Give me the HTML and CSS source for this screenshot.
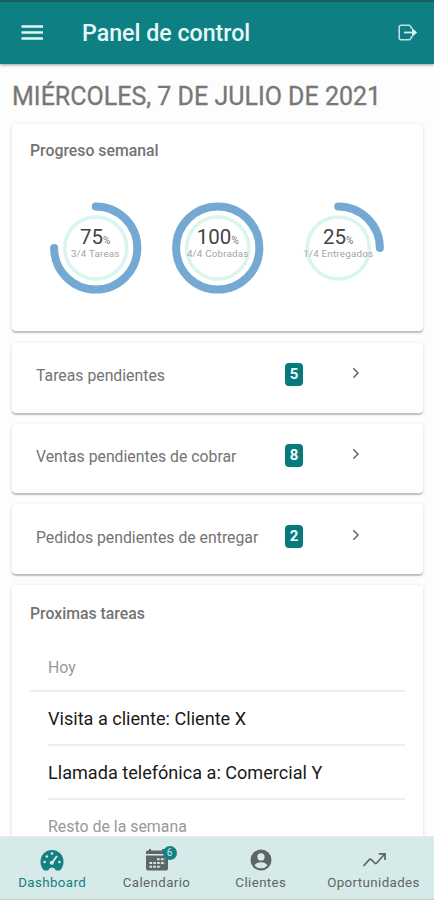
FILE: index.html
```html
<!doctype html>
<html lang="es">

<head>
  <meta charset="utf-8" />
  <meta name="viewport" content="width=device-width,initial-scale=1" />
  <title>Panel de control</title>
  <link rel="stylesheet" href="styles.css">
</head>

<body>
  <div class="app">
    <header class="toolbar">
      <svg class="menu-icon" width="22" height="16" viewBox="0 0 22 16">
        <path d="M.5 1.500h21.500M.5 7.500h21.500M.5 13.500h21.500" stroke="#e2f5f4" stroke-width="2.400" />
      </svg>
      <h1 class="toolbar-title">Panel de control</h1>
      <svg class="logout-icon" width="20" height="18" viewBox="0 0 20 18" fill="none">
        <path d="M13.500 5V3.500L11.500 1.200H3.200Q1.200 1.200 1.200 3.200V13.800Q1.200 15.800 3.200 15.800H11.500L13.500 13.500V12" stroke="#b9dfdf" stroke-width="1.600" />
        <path d="M6 8.500H16" stroke="#d5eeee" stroke-width="1.700" />
        <path d="M14 4L19.200 8.500L14 13Z" fill="#d5eeee" />
      </svg>
    </header>

    <main class="content">
      <h2 class="date">MIÉRCOLES, 7 DE JULIO DE 2021</h2>

      <section class="card progress">
        <h3 class="card-title">Progreso semanal</h3>
        <div class="rings">
          <svg class="ring" viewBox="0 0 121 94">
            <circle class="ring-inner" cx="60.500" cy="47" r="31" />
            <path class="ring-outer" d="M60.500 5.400A41.600 41.600 0 1 1 18.900 47" />
            <text class="ring-value" x="60" y="43">75<tspan class="unit">%</tspan></text>
            <text class="ring-sub" x="60" y="56">3/4 Tareas</text>
          </svg>
          <svg class="ring" viewBox="0 0 121 94">
            <circle class="ring-inner" cx="60.500" cy="47" r="31" />
            <circle class="ring-outer" cx="60.500" cy="47" r="41.600" />
            <text class="ring-value" x="60.500" y="43">100<tspan class="unit">%</tspan></text>
            <text class="ring-sub" x="60.500" y="56">4/4 Cobradas</text>
          </svg>
          <svg class="ring" viewBox="0 0 121 94">
            <circle class="ring-inner" cx="60" cy="47" r="31" />
            <path class="ring-outer" d="M60 5.400A41.600 41.600 0 0 1 101.600 47" />
            <text class="ring-value" x="60" y="43">25<tspan class="unit">%</tspan></text>
            <text class="ring-sub" x="60" y="56">1/4 Entregados</text>
          </svg>
        </div>
      </section>

      <section class="card pending">
        <span class="pending-label">Tareas pendientes</span>
        <span class="badge">5</span>
        <svg class="chevron" width="8" height="12" viewBox="0 0 8 12"><path d="M1.300 1.200L6 6L1.300 10.800" /></svg>
      </section>
      <section class="card pending">
        <span class="pending-label">Ventas pendientes de cobrar</span>
        <span class="badge">8</span>
        <svg class="chevron" width="8" height="12" viewBox="0 0 8 12"><path d="M1.300 1.200L6 6L1.300 10.800" /></svg>
      </section>
      <section class="card pending">
        <span class="pending-label">Pedidos pendientes de entregar</span>
        <span class="badge">2</span>
        <svg class="chevron" width="8" height="12" viewBox="0 0 8 12"><path d="M1.300 1.200L6 6L1.300 10.800" /></svg>
      </section>

      <section class="card tasks">
        <h3 class="card-title">Proximas tareas</h3>
        <div class="list-header">Hoy</div>
        <div class="task">Visita a cliente: Cliente X</div>
        <div class="task">Llamada telefónica a: Comercial Y</div>
        <div class="list-header rest">Resto de la semana</div>
      </section>
    </main>

    <nav class="tabs">
      <a class="tab active">
        <svg width="24" height="24" viewBox="0 0 24 24">
          <path d="M4.200 22.500Q.5 19 .5 13.500A11.500 11.500 0 0 1 23.500 13.500Q23.500 19 19.800 22.500H16Q14.500 19.500 12 19.500T8 22.500Z" fill="currentColor" />
          <path d="M11.500 15.500L17 8" stroke="#d6eae9" stroke-width="2" />
          <circle cx="11.800" cy="14.800" r="2" fill="#d6eae9" />
          <g fill="#d6eae9">
            <circle cx="12" cy="5.500" r="1.300" />
            <circle cx="6.800" cy="8.500" r="1.300" />
            <circle cx="4.600" cy="14" r="1.300" />
            <circle cx="19.400" cy="14" r="1.300" />
          </g>
        </svg>
        <span>Dashboard</span>
      </a>
      <a class="tab">
        <span class="calendar">
          <svg width="24" height="24" viewBox="0 0 24 24">
            <path d="M1 4Q1 2.500 2.500 2.500H4V1H6V2.500H17V1H19V2.500H21.500Q23 2.500 23 4V6H1Z" fill="currentColor" />
            <path d="M1 7.500H23V20.500Q23 22.500 21 22.500H3Q1 22.500 1 20.500Z" fill="currentColor" />
            <path d="M12 11.300H20M4.500 15H20M4.500 18.700H16" stroke="#d6eae9" stroke-width="2" stroke-dasharray="2.600 1.200" />
          </svg>
          <span class="tab-badge">6</span>
        </span>
        <span>Calendario</span>
      </a>
      <a class="tab">
        <svg width="24" height="24" viewBox="0 0 24 24">
          <circle cx="12" cy="12" r="10.500" fill="currentColor" />
          <circle cx="12" cy="8.900" r="3.600" fill="#d6eae9" />
          <path d="M5.500 17.500Q7.500 14.300 12 14.300T18.500 17.500Q16 20.300 12 20.300T5.500 17.500Z" fill="#d6eae9" />
        </svg>
        <span>Clientes</span>
      </a>
      <a class="tab">
        <svg width="24" height="24" viewBox="0 0 24 24" fill="none" stroke="currentColor" stroke-width="1.700">
          <path d="M1.500 18L7.200 11.700Q8.300 10.700 9.300 11.700L12.700 15Q13.700 16 14.700 15L22.500 6.200M16.800 5.800H23V12" />
        </svg>
        <span>Oportunidades</span>
      </a>
    </nav>
  </div>
</body>

</html>
```
FILE: styles.css
```css
* {
  box-sizing: border-box;
}

body {
  margin: 0;
  font-family: Roboto, "Liberation Sans", sans-serif;
  background: #fdfdfd;
}

h1,
h2,
h3 {
  margin: 0;
}

svg {
  display: block;
  flex-shrink: 0;
}

.app {
  display: flex;
  flex-direction: column;
  height: 900px;
  overflow: hidden;
}

.toolbar {
  display: flex;
  align-items: center;
  flex-shrink: 0;
  height: 64px;
  padding: 0 16px 0 21px;
  border-top: 2px solid #15605f;
  background: #0e8084;
  box-shadow: 0 1px 3px #0006;
}

.toolbar-title {
  flex: 1;
  margin-left: 39px;
  font-size: 23.2px;
  font-weight: 500;
  line-height: 30px;
  color: #e6f8f7;
}

.content {
  flex: 1;
  min-height: 0;
  padding: 0 11px 0 12px;
  overflow: hidden;
}

.date {
  height: 60px;
  padding-top: 18px;
  font-size: 25px;
  font-weight: 400;
  line-height: 30px;
  color: #777;
  white-space: nowrap;
  -webkit-text-stroke: 0.3px #777;
}

.card {
  margin-bottom: 11px;
  border-radius: 4px;
  background: #fff;
  box-shadow: 0 2px 1px #00000030, 0 1px 4px #0000001f;
}

.card-title {
  padding-left: 18px;
  font-size: 15.8px;
  font-weight: 500;
  line-height: 20px;
  color: #737373;
}

.progress {
  height: 207px;
  padding-top: 17px;
  margin-bottom: 12px;
}

.rings {
  display: flex;
  justify-content: center;
  padding-top: 40px;
}

.ring {
  width: 121.5px;
  height: 94px;
  overflow: visible;
}

.ring-inner {
  fill: none;
  stroke: #d8f5ef;
  stroke-width: 3.5;
}

.ring-outer {
  fill: none;
  stroke: #73a9d2;
  stroke-width: 8;
  stroke-linecap: round;
}

.ring-value {
  font-size: 20.5px;
  fill: #444;
  text-anchor: middle;
}

.ring-value .unit {
  font-size: 10px;
  fill: #777;
}

.ring-sub {
  font-size: 9.8px;
  letter-spacing: 0.2px;
  fill: #a5a5a5;
  text-anchor: middle;
}

.pending {
  display: flex;
  height: 69.7px;
  padding: 20.3px 0 0 24px;
}

.pending-label {
  width: 249px;
  padding-top: 3px;
  font-size: 15.8px;
  line-height: 20px;
  color: #737373;
  white-space: nowrap;
}

.badge {
  width: 18px;
  height: 23px;
  border-radius: 4px;
  background: #087a7d;
  color: #f2ffff;
  font-size: 15px;
  font-weight: 700;
  line-height: 22px;
  text-align: center;
}

.chevron {
  margin: 4px 0 0 49px;
  fill: none;
  stroke: #666;
  stroke-width: 1.5;
}

.tasks {
  height: 400px;
  padding: 18.5px 18px 0 0;
}

.list-header {
  height: 68px;
  margin-left: 18px;
  padding: 34px 0 0 18px;
  border-bottom: 2px solid #eee;
  font-size: 15.9px;
  line-height: 20px;
  color: #999;
}

.task {
  height: 54px;
  margin-left: 36px;
  border-bottom: 2px solid #eee;
  font-size: 18.1px;
  line-height: 54px;
  color: #1a1a1a;
}

.list-header.rest {
  padding-top: 17px;
  border: 0;
}

.tabs {
  display: flex;
  flex-shrink: 0;
  height: 64px;
  border-top: 1px solid #e3eded;
  border-bottom: 1px solid #b9d2d1;
  background: #d6eae9;
}

.tab {
  display: flex;
  flex-direction: column;
  align-items: center;
  width: 104.4px;
  padding-top: 11px;
  font-size: 13.3px;
  line-height: 22px;
  letter-spacing: 0.4px;
  color: #5c6666;
}

.tab:last-child {
  width: 121px;
}

.tab.active {
  color: #14807f;
}

.calendar {
  position: relative;
}

.tab-badge {
  position: absolute;
  top: -2px;
  right: -8px;
  width: 14px;
  height: 14px;
  border-radius: 50%;
  background: #128183;
  color: #d6eae9;
  font-size: 10px;
  line-height: 14px;
  text-align: center;
  letter-spacing: 0;
}
```
